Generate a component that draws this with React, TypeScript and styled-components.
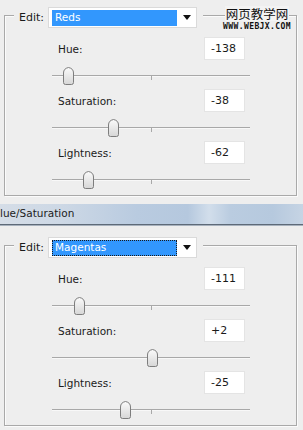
import React from 'react';
import styled, { createGlobalStyle } from 'styled-components';

const GlobalStyle = createGlobalStyle`
  html, body {
    margin: 0;
    padding: 0;
    background: #eeeeee;
  }
  body {
    font-family: "DejaVu Sans", "Liberation Sans", sans-serif;
    font-size: 10.5px;
    color: #1a1a1a;
  }
`;

const Page = styled.div`
  position: relative;
  width: 303px;
  height: 430px;
  overflow: hidden;
  background: #eeeeee;
`;

const Panel = styled.div<{ $top: number; $bottom: number }>`
  padding: ${p => p.$top}px 0 ${p => p.$bottom}px 4px;
`;

const GroupBox = styled.div`
  width: 291px;
  border: 1px solid #a9a9a9;
  box-shadow: inset 1px 1px 0 #fbfbfb, 1px 1px 0 #fbfbfb;
  padding-bottom: 2px;
`;

const GroupHeader = styled.div`
  display: flex;
  align-items: center;
  width: fit-content;
  margin: -9px 0 0 9px;
  padding: 0 6px 0 5px;
  background: #eeeeee;
`;

const EditLabel = styled.span`
  margin-right: 4px;
  font-size: 11px;
`;

const Select = styled.div`
  display: flex;
  align-items: center;
  width: 149px;
  height: 21px;
  box-sizing: border-box;
  background: #ffffff;
  border: 1px solid #dadada;
  padding: 0 0 0 3px;
`;

const Selected = styled.div<{ $focused?: boolean }>`
  width: 125px;
  height: 16px;
  box-sizing: border-box;
  background: #3297fd;
  color: #ffffff;
  padding: 0 0 0 3px;
  line-height: 15px;
  outline: ${p => (p.$focused ? '1px dotted #1a1a1a' : 'none')};
  outline-offset: -1px;
`;

const Arrow = styled.div`
  flex: 1;
  display: flex;
  justify-content: center;
`;

const Rows = styled.div`
  padding-top: 9px;
`;

const LabelRow = styled.div`
  display: flex;
  justify-content: space-between;
  align-items: center;
  width: 187px;
  height: 23px;
  margin-left: 53px;
`;

const ValueBox = styled.div`
  width: 41px;
  height: 23px;
  box-sizing: border-box;
  background: #ffffff;
  border: 1px solid #e4e4e4;
  padding-left: 6px;
  font-size: 11px;
  line-height: 21px;
`;

const SliderRow = styled.div`
  position: relative;
  width: 198px;
  height: 29px;
  margin-left: 47px;
`;

const Track = styled.div`
  position: absolute;
  left: 0;
  right: 0;
  top: 15px;
  height: 1px;
  background: #a8a8a8;
  border-bottom: 1px solid #f8f8f8;
`;

const Tick = styled.div`
  position: absolute;
  left: 99px;
  top: 15px;
  width: 1px;
  height: 5px;
  background: #a8a8a8;
`;

const Thumb = styled.svg`
  position: absolute;
  top: 7px;
  margin-left: -5px;
`;

const TitleBar = styled.div`
  height: 20px;
  line-height: 19px;
  background: linear-gradient(
    to right,
    #d5dde7 0%,
    #cdd8e5 20%,
    #b9cbe0 45%,
    #b5c8de 62%,
    #d2deeb 69%,
    #bacce0 76%,
    #b6c9de 90%,
    #c6d4e4 100%
  );
  border-bottom: 1px solid #5e6a78;
  box-shadow: 0 1px 0 #a7b1bd;
  margin-bottom: 1px;
  font-size: 10.5px;
  color: #1c1c1c;
`;

const Watermark = styled.div`
  position: absolute;
  left: 218px;
  top: 6px;
  width: 78px;
  text-align: center;
`;

const WatermarkCn = styled.div`
  display: inline-block;
  background: #f3f3f3;
  font-family: "Noto Sans CJK SC", sans-serif;
  font-size: 12.5px;
  line-height: 15px;
  color: #111111;
  padding: 0 1px;
`;

const WatermarkUrl = styled.div`
  margin-top: 2px;
  font-family: "DejaVu Sans Mono", monospace;
  font-weight: bold;
  font-size: 8px;
  line-height: 8px;
  letter-spacing: 0.4px;
  color: #111111;
`;

type Adjust = { label: string; value: string; pos: number };

type Setting = { channel: string; focused: boolean; adjust: Adjust[] };

const settings: Setting[] = [
  {
    channel: 'Reds',
    focused: false,
    adjust: [
      { label: 'Hue:', value: '-138', pos: 16 },
      { label: 'Saturation:', value: '-38', pos: 61 },
      { label: 'Lightness:', value: '-62', pos: 36 },
    ],
  },
  {
    channel: 'Magentas',
    focused: true,
    adjust: [
      { label: 'Hue:', value: '-111', pos: 27 },
      { label: 'Saturation:', value: '+2', pos: 100 },
      { label: 'Lightness:', value: '-25', pos: 73 },
    ],
  },
];

const ThumbIcon: React.FC<{ left: number }> = ({ left }) => (
  <Thumb width="11" height="18" viewBox="0 0 11 18" style={{ left }}>
    <defs>
      <linearGradient id="thumbFill" x1="0" y1="0" x2="0" y2="1">
        <stop offset="0" stopColor="#fbfbfb" />
        <stop offset="1" stopColor="#d6d6d6" />
      </linearGradient>
    </defs>
    <path
      d="M0.5 6 Q0.5 1.5 5.5 0.5 Q10.5 1.5 10.5 6 L10.5 15.5 Q10.5 17.5 8.5 17.5 L2.5 17.5 Q0.5 17.5 0.5 15.5 Z"
      fill="url(#thumbFill)"
      stroke="#7d7d7d"
    />
  </Thumb>
);

const HueGroup: React.FC<{ setting: Setting }> = ({ setting }) => (
  <GroupBox>
    <GroupHeader>
      <EditLabel>Edit:</EditLabel>
      <Select>
        <Selected $focused={setting.focused}>{setting.channel}</Selected>
        <Arrow>
          <svg width="8" height="5" viewBox="0 0 8 5">
            <path d="M0 0 L8 0 L4 5 Z" fill="#111" />
          </svg>
        </Arrow>
      </Select>
    </GroupHeader>
    <Rows>
      {setting.adjust.map(a => (
        <React.Fragment key={a.label}>
          <LabelRow>
            <span>{a.label}</span>
            <ValueBox>{a.value}</ValueBox>
          </LabelRow>
          <SliderRow>
            <Track />
            <Tick />
            <ThumbIcon left={a.pos} />
          </SliderRow>
        </React.Fragment>
      ))}
    </Rows>
  </GroupBox>
);

const App: React.FC = () => (
  <Page>
    <GlobalStyle />
    <Panel $top={15} $bottom={8}>
      <HueGroup setting={settings[0]} />
    </Panel>
    <TitleBar>lue/Saturation</TitleBar>
    <Panel $top={19} $bottom={4}>
      <HueGroup setting={settings[1]} />
    </Panel>
    <Watermark>
      <WatermarkCn>网页教学网</WatermarkCn>
      <WatermarkUrl>WWW.WEBJX.COM</WatermarkUrl>
    </Watermark>
  </Page>
);

export default App;
